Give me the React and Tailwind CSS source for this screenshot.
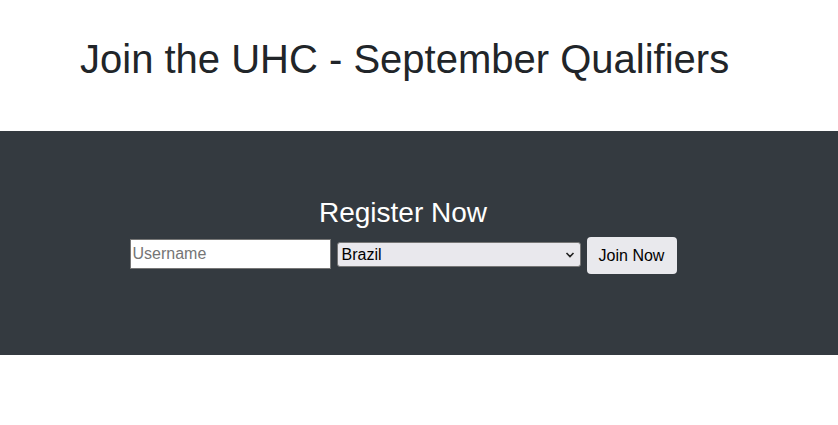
export default function App() {
  return (
    <div className="w-[838px] h-[425px] bg-white" style={{ fontFamily: '"Liberation Sans", Arial, sans-serif' }}>
      <div className="h-[131px] pl-[80px] pt-[35px]">
        <h1 className="text-[40px] leading-[48px] text-[#212529] font-normal">Join the UHC - September Qualifiers</h1>
      </div>
      <div className="h-[224px] bg-[#343a40] flex flex-col items-center pt-[65px] pr-[32px]">
        <h2 className="text-[28px] leading-[34px] text-white font-normal">Register Now</h2>
        <div className="flex items-start gap-[6px] mt-[7px]">
          <input
            placeholder="Username"
            className="mt-[2px] w-[201px] h-[30px] bg-white border border-[#767676] px-[2px] text-[16px] text-black placeholder:text-[#757575] outline-none"
          />
          <div className="mt-[5px] relative w-[244px] h-[25px] bg-[#e9e8ed] border border-[#767676] rounded-[3px] flex items-center pl-[4px] text-[16px] text-black">
            Brazil
            <svg className="absolute right-[5px] top-[8px]" width="10" height="8" viewBox="0 0 10 8">
              <path d="M1.5 2 L5 5.5 L8.5 2" fill="none" stroke="#222" strokeWidth="1.6" />
            </svg>
          </div>
          <button className="w-[90px] h-[37px] bg-[#e9e9ed] rounded-[4px] text-[16px] text-black">Join Now</button>
        </div>
      </div>
    </div>
  );
}
